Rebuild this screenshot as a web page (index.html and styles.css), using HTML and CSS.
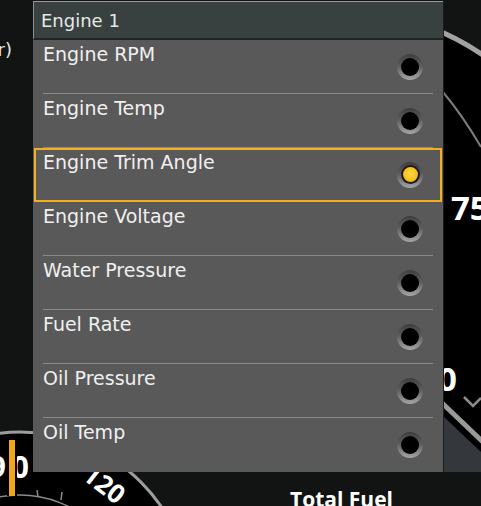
FILE: index.html
```html
<!DOCTYPE html>
<html>
<head>
<meta charset="utf-8">
<link rel="stylesheet" href="styles.css">
</head>
<body>
<svg class="bg" width="481" height="506" viewBox="0 0 481 506">
  <rect class="bg-dark" width="481" height="506"/>
  <circle class="gauge" cx="330" cy="280" r="272"/>
  <path class="thin-arc" d="M443 92 Q463 116 481 147"/>
  <text class="big-num" x="451" y="220">75</text>
  <text class="big-num" x="457" y="391" text-anchor="end">50</text>
  <polyline class="tick" points="464,397 473,406 481,398"/>
  <polygon class="sector" points="443,416 481,452 481,472 443,472"/>
  <path class="band" d="M441 402 L483 442"/>
  <rect class="bg-dark" x="0" y="472" width="481" height="34"/>
  <circle class="gauge gauge-left" cx="20" cy="603" r="171"/>
  <circle class="minor-arc" cx="20" cy="603" r="108"/>
  <line class="minor-tick" x1="37" y1="490" x2="38" y2="497"/>
  <line class="minor-tick" x1="62" y1="492" x2="61" y2="500"/>
  <text class="mid-num" transform="translate(81,478) rotate(38)">120</text>
  <text class="mid-num left-num" x="6" y="478" text-anchor="end">9</text>
  <text class="mid-num left-num" x="29" y="478" text-anchor="end">0</text>
  <rect class="bar-edge" x="7" y="440" width="10" height="56"/>
  <rect class="bar" x="9" y="440" width="6" height="56"/>
  <text class="unit" x="12" y="56" text-anchor="end">r)</text>
  <text class="fuel" x="290" y="507">Total Fuel</text>
</svg>

<div class="menu">
  <div class="menu-head">Engine 1</div>
  <ul class="menu-list">
    <li class="item"><span class="label">Engine RPM</span><span class="radio"><span class="hole"></span></span></li>
    <li class="item"><span class="label">Engine Temp</span><span class="radio"><span class="hole"></span></span></li>
    <li class="item selected"><span class="label">Engine Trim Angle</span><span class="radio"><span class="hole"><span class="dot"></span></span></span></li>
    <li class="item"><span class="label">Engine Voltage</span><span class="radio"><span class="hole"></span></span></li>
    <li class="item"><span class="label">Water Pressure</span><span class="radio"><span class="hole"></span></span></li>
    <li class="item"><span class="label">Fuel Rate</span><span class="radio"><span class="hole"></span></span></li>
    <li class="item"><span class="label">Oil Pressure</span><span class="radio"><span class="hole"></span></span></li>
    <li class="item last"><span class="label">Oil Temp</span><span class="radio"><span class="hole"></span></span></li>
  </ul>
</div>
</body>
</html>
```
FILE: styles.css
```css
html, body {
  margin: 0;
  padding: 0;
  width: 481px;
  height: 506px;
  overflow: hidden;
  background: #111412;
  font-family: "DejaVu Sans", "Liberation Sans", sans-serif;
}

.bg {
  position: absolute;
  left: 0;
  top: 0;
  display: block;
}

.bg-dark { fill: #111412; }
.gauge { fill: #000; stroke: #a2a2a2; stroke-width: 5; }
.gauge-left { stroke-width: 3; stroke: #9c9c9c; }
.thin-arc { fill: none; stroke: #7c7c7c; stroke-width: 2; }
.tick { fill: none; stroke: #8c8c8c; stroke-width: 2.5; }
.sector { fill: #34373c; }
.band { stroke: #9a9a9a; stroke-width: 5; }
.minor-arc { fill: none; stroke: #8a8a8a; stroke-width: 1.5; }
.minor-tick { stroke: #8a8a8a; stroke-width: 1.5; }
.bar-edge { fill: #000; }
.bar { fill: #f2a71b; }

.big-num {
  font-family: "Open Sans", "DejaVu Sans", sans-serif;
  font-weight: 700;
  font-size: 33px;
  fill: #ffffff;
}
.mid-num {
  font-family: "Open Sans", "DejaVu Sans", sans-serif;
  font-weight: 700;
  font-size: 26px;
  fill: #ffffff;
}
.left-num { font-size: 30px; }
.unit {
  font-family: "DejaVu Sans", sans-serif;
  font-size: 18px;
  fill: #e8e8e8;
}
.fuel {
  font-family: "Open Sans", "DejaVu Sans", sans-serif;
  font-weight: 700;
  font-size: 21px;
  fill: #ffffff;
}

.menu {
  position: absolute;
  left: 33px;
  top: 1px;
  width: 410px;
  border-right: 1px solid #1c1c1c;
  background: #595959;
}

.menu-head {
  height: 34px;
  padding: 2px 0 0 7px;
  line-height: 34px;
  font-size: 18px;
  color: #e6e8e8;
  background: #394040;
  border-top: 1px solid #9c9c9c;
  border-left: 1px solid #8a8f8f;
  border-bottom: 2px solid #1f2323;
}

.menu-list {
  list-style: none;
  margin: 0;
  padding: 0;
}

.item {
  position: relative;
  height: 54px;
  box-sizing: border-box;
  padding: 3px 20px 0 10px;
  display: flex;
  justify-content: space-between;
  align-items: flex-start;
}

.item::after {
  content: "";
  position: absolute;
  left: 10px;
  right: 10px;
  bottom: 0;
  height: 1px;
  background: #8a8a8a;
}

.item.last::after { display: none; }

.item.selected::before {
  content: "";
  position: absolute;
  left: 1px;
  right: 1px;
  top: 0;
  bottom: 0;
  border: 2px solid #f4ae1e;
  z-index: 1;
}

.label {
  font-size: 19px;
  line-height: 22px;
  color: #f0f0f0;
}

.radio {
  align-self: center;
  margin-top: -4px;
  width: 26px;
  height: 26px;
  border-radius: 50%;
  background: linear-gradient(to bottom, #3e3e3e 0%, #5c5c5c 45%, #a6a6a6 100%);
  display: flex;
  align-items: center;
  justify-content: center;
}

.hole {
  width: 18px;
  height: 18px;
  border-radius: 50%;
  background: #000;
  display: flex;
  align-items: center;
  justify-content: center;
}

.selected .hole {
  width: 19px;
  height: 19px;
  background: #1a1a1a;
}

.dot {
  width: 15px;
  height: 15px;
  border-radius: 50%;
  background: radial-gradient(circle at 50% 45%, #ffd84a 0%, #f9c21c 55%, #e0a000 100%);
}
```
